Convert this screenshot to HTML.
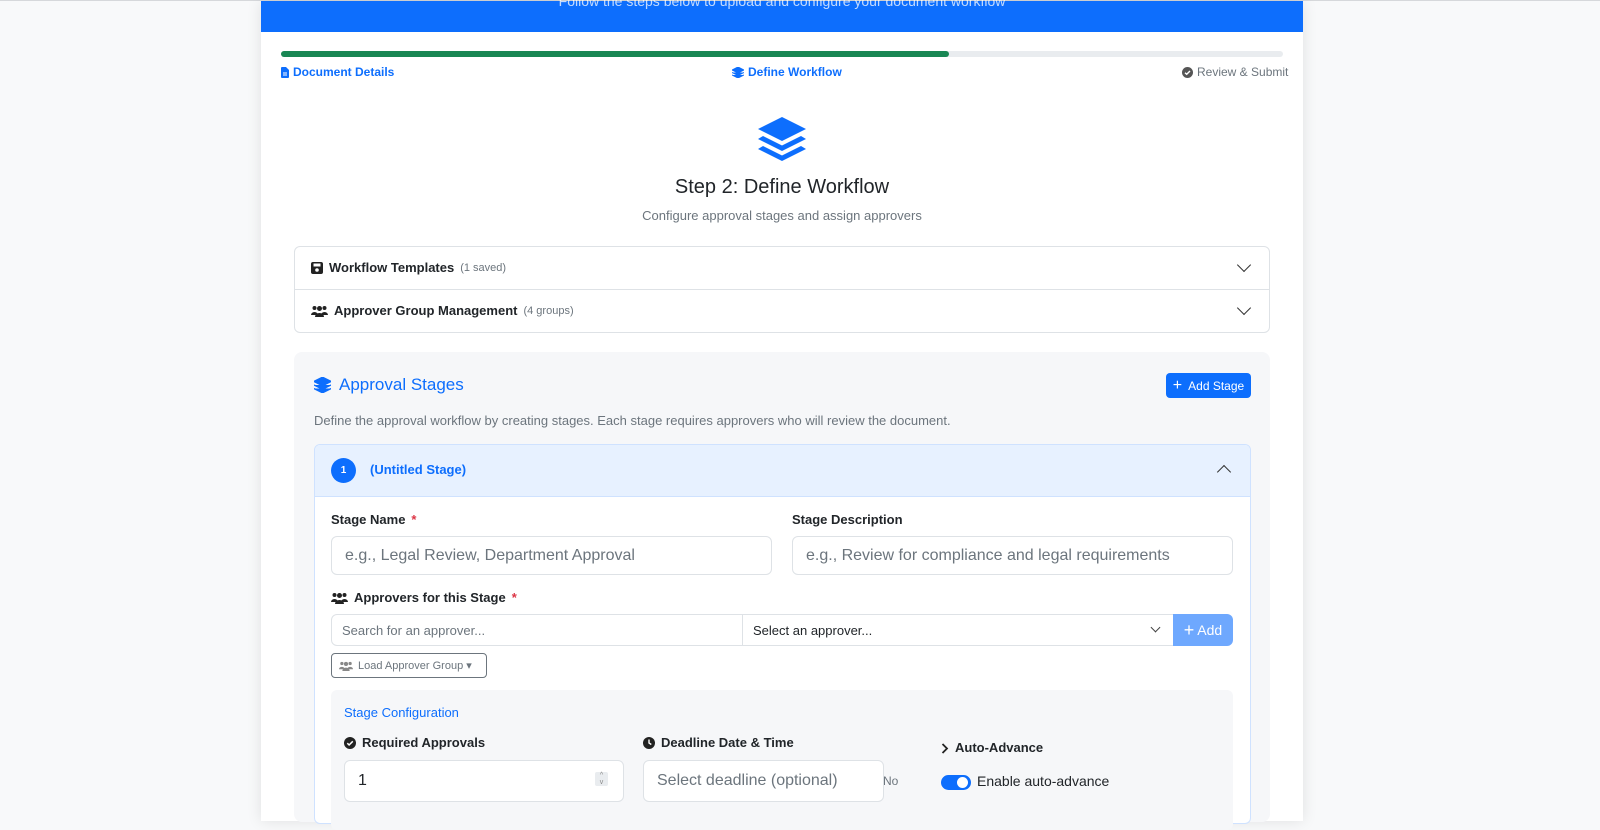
<!DOCTYPE html>
<html><head><meta charset="utf-8"><style>
*{box-sizing:border-box;margin:0;padding:0}
body{width:1600px;height:806px;overflow:hidden;background:#f8f9fa;font-family:"Liberation Sans","DejaVu Sans",sans-serif;color:#212529;position:relative}
.a{position:absolute}
.topline{left:0;top:0;width:1600px;height:1px;background:#d6d8db}
.card{left:261px;top:1px;width:1042px;height:820px;background:#fff;box-shadow:0 0 14px rgba(0,0,0,.10)}
.hdr{left:261px;top:1px;width:1042px;height:31px;background:#0d6efd}
.hdrt{left:261px;width:1042px;top:-7px;text-align:center;color:rgba(255,255,255,.75);font-size:14px}
.step{font-size:12px;font-weight:bold;color:#0d6efd;top:65px;line-height:15px;display:flex;align-items:center;gap:4px}
.inp{background:#fff;border:1px solid #dee2e6;border-radius:6px;color:#6c757d;font-size:16px;display:flex;align-items:center;padding-left:13px}
.lbl{font-size:13px;font-weight:bold;color:#212529;display:flex;align-items:center;gap:6px;line-height:16px}
.chev{width:10px;height:10px;border-right:1.5px solid #333;border-bottom:1.5px solid #333;transform:rotate(45deg)}
</style></head><body>
<div class="a topline"></div>
<div class="a card"></div>
<div class="a hdr"></div>
<div class="a hdrt">Follow the steps below to upload and configure your document workflow</div>
<div class="a" style="left:281px;top:51px;width:1002px;height:6px;border-radius:3px;background:#e9ecef"></div>
<div class="a" style="left:281px;top:51px;width:668px;height:6px;border-radius:3px;background:#198754"></div>
<div class="a step" style="left:281px"><svg width="8" height="11" viewBox="0 0 8 11"><path d="M0 1a1 1 0 0 1 1-1h4l3 3v7a1 1 0 0 1-1 1H1a1 1 0 0 1-1-1z" fill="#0d6efd"/><path d="M2 6h4M2 8h4" stroke="#fff" stroke-width="1"/></svg>Document Details</div>
<div class="a step" style="left:732px"><svg width="12" height="11" viewBox="0 0 12 11"><path d="M6 0L12 3 6 6 0 3z M0 5.5L6 8.5 12 5.5 M0 8L6 11 12 8" fill="#0d6efd" stroke="#0d6efd" stroke-width="1"/></svg>Define Workflow</div>
<div class="a" style="left:1182px;top:65px;font-size:12px;color:#6c757d;display:flex;align-items:center;gap:4px;line-height:15px"><svg width="11" height="11"><circle cx="5.5" cy="5.5" r="5.5" fill="#555"/><path d="M3 5.7l1.7 1.6L8 4" stroke="#fff" stroke-width="1.4" fill="none"/></svg>Review &amp; Submit</div>
<svg class="a" style="left:758px;top:117px" width="48" height="47" viewBox="0 0 48 47"><path d="M24 0L48 12 24 24 0 12z" fill="#0d6efd"/><path d="M5 19l19 9.5L43 19l5 3-24 12L0 22z" fill="#0d6efd"/><path d="M5 29l19 9.5L43 29l5 3-24 12L0 32z" fill="#0d6efd"/></svg>
<div class="a" style="left:261px;width:1042px;top:176px;text-align:center;font-size:20px;color:#212529">Step 2: Define Workflow</div>
<div class="a" style="left:261px;width:1042px;top:208px;text-align:center;font-size:13px;color:#6c757d">Configure approval stages and assign approvers</div>
<div class="a" style="left:294px;top:246px;width:976px;height:87px;border:1px solid #dee2e6;border-radius:6px"></div>
<div class="a" style="left:295px;top:289px;width:974px;height:1px;background:#dee2e6"></div>
<div class="a lbl" style="left:311px;top:260px"><svg width="12" height="12"><rect x="0" y="0" width="12" height="12" rx="2" fill="#222"/><rect x="2.5" y="1.5" width="7" height="3" fill="#fff"/><circle cx="6" cy="8" r="1.8" fill="#fff"/></svg>Workflow Templates <span style="font-weight:normal;color:#6c757d;font-size:11px">(1 saved)</span></div>
<div class="a lbl" style="left:311px;top:303px"><svg width="17" height="12" viewBox="0 0 17 12"><circle cx="3.5" cy="3" r="2" fill="#222"/><circle cx="13.5" cy="3" r="2" fill="#222"/><circle cx="8.5" cy="3.5" r="2.5" fill="#222"/><path d="M0 10a3.5 3 0 0 1 7 0zM10 10a3.5 3 0 0 1 7 0zM4 12a4.5 4 0 0 1 9 0z" fill="#222"/></svg>Approver Group Management <span style="font-weight:normal;color:#6c757d;font-size:11px">(4 groups)</span></div>
<div class="a chev" style="left:1239px;top:260px"></div>
<div class="a chev" style="left:1239px;top:303px"></div>
<div class="a" style="left:294px;top:352px;width:976px;height:470px;background:#f6f7f9;border-radius:8px"></div>
<svg class="a" style="left:314px;top:377px" width="17" height="16" viewBox="0 0 12 11"><path d="M6 0L12 3 6 6 0 3z M0 5.5L6 8.5 12 5.5 M0 8L6 11 12 8" fill="#0d6efd" stroke="#0d6efd" stroke-width="1"/></svg>
<div class="a" style="left:339px;top:375px;font-size:17px;color:#0d6efd">Approval Stages</div>
<div class="a" style="left:1166px;top:373px;width:85px;height:25px;background:#0d6efd;border-radius:4px;color:#fff;font-size:12px;display:flex;align-items:center;justify-content:center;gap:6px"><span style="font-size:16px;line-height:1">+</span>Add Stage</div>
<div class="a" style="left:314px;top:413px;font-size:13px;color:#6c757d">Define the approval workflow by creating stages. Each stage requires approvers who will review the document.</div>
<div class="a" style="left:314px;top:444px;width:937px;height:380px;background:#fff;border:1px solid #cfe2ff;border-radius:6px;overflow:hidden"><div style="height:52px;background:#e7f1ff;border-bottom:1px solid #cfe2ff"></div></div>
<div class="a" style="left:331px;top:458px;width:25px;height:25px;border-radius:50%;background:#0d6efd;color:#fff;font-size:10px;font-weight:bold;display:flex;align-items:center;justify-content:center">1</div>
<div class="a" style="left:370px;top:462px;font-size:13px;font-weight:bold;color:#0d6efd">(Untitled Stage)</div>
<div class="a chev" style="left:1219px;top:467px;transform:rotate(225deg)"></div>
<div class="a lbl" style="left:331px;top:512px">Stage Name <span style="color:#dc3545">*</span></div>
<div class="a lbl" style="left:792px;top:512px">Stage Description</div>
<div class="a inp" style="left:331px;top:536px;width:441px;height:39px">e.g., Legal Review, Department Approval</div>
<div class="a inp" style="left:792px;top:536px;width:441px;height:39px">e.g., Review for compliance and legal requirements</div>
<div class="a lbl" style="left:331px;top:590px"><svg width="17" height="12" viewBox="0 0 17 12"><circle cx="3.5" cy="3" r="2" fill="#222"/><circle cx="13.5" cy="3" r="2" fill="#222"/><circle cx="8.5" cy="3.5" r="2.5" fill="#222"/><path d="M0 10a3.5 3 0 0 1 7 0zM10 10a3.5 3 0 0 1 7 0zM4 12a4.5 4 0 0 1 9 0z" fill="#222"/></svg>Approvers for this Stage <span style="color:#dc3545">*</span></div>
<div class="a inp" style="left:331px;top:614px;width:412px;height:32px;font-size:13px;border-radius:6px 0 0 6px;padding-left:10px">Search for an approver...</div>
<div class="a inp" style="left:742px;top:614px;width:432px;height:32px;font-size:13px;color:#212529;border-radius:0;padding-left:10px">Select an approver...</div>
<div class="a chev" style="left:1152px;top:624px;width:7px;height:7px;border-color:#444;border-width:1.2px"></div>
<div class="a" style="left:1173px;top:614px;width:60px;height:32px;background:#6ea8fe;border-radius:0 6px 6px 0;color:#fff;font-size:14px;display:flex;align-items:center;justify-content:center;gap:3px"><span style="font-size:18px;line-height:1">+</span>Add</div>
<div class="a" style="left:331px;top:653px;width:156px;height:25px;border:1px solid #6c757d;border-radius:4px;font-size:11px;color:#6c757d;display:flex;align-items:center;padding-left:7px;gap:5px"><svg width="14" height="10" viewBox="0 0 17 12"><circle cx="3.5" cy="3" r="2" fill="#888"/><circle cx="13.5" cy="3" r="2" fill="#888"/><circle cx="8.5" cy="3.5" r="2.5" fill="#888"/><path d="M0 10a3.5 3 0 0 1 7 0zM10 10a3.5 3 0 0 1 7 0zM4 12a4.5 4 0 0 1 9 0z" fill="#888"/></svg>Load Approver Group ▾</div>
<div class="a" style="left:331px;top:690px;width:902px;height:140px;background:#f6f7f9;border-radius:6px"></div>
<div class="a" style="left:344px;top:705px;font-size:13px;color:#0d6efd">Stage Configuration</div>
<div class="a lbl" style="left:344px;top:735px"><svg width="12" height="12"><circle cx="6" cy="6" r="6" fill="#222"/><path d="M3.3 6.2l1.8 1.8L8.8 4.3" stroke="#fff" stroke-width="1.5" fill="none"/></svg>Required Approvals</div>
<div class="a lbl" style="left:643px;top:735px"><svg width="12" height="12"><circle cx="6" cy="6" r="6" fill="#222"/><path d="M6 2.5V6l2.3 1.5" stroke="#fff" stroke-width="1.4" fill="none"/></svg>Deadline Date &amp; Time</div>
<div class="a inp" style="left:344px;top:760px;width:280px;height:42px;color:#212529">1</div>
<div class="a" style="left:595px;top:772px;width:13px;height:14px;background:#e9ecef;border-radius:2px;font-size:7px;color:#888;text-align:center;line-height:7px">^<br>v</div>
<div class="a inp" style="left:643px;top:760px;width:241px;height:42px">Select deadline (optional)</div>
<div class="a" style="left:883px;top:774px;font-size:12px;color:#6c757d">No</div>
<div class="a lbl" style="left:941px;top:740px;font-size:13px"><svg width="8" height="11"><path d="M1.5 1l4.5 4.5L1.5 10" stroke="#222" stroke-width="1.8" fill="none"/></svg>Auto-Advance</div>
<div class="a" style="left:941px;top:775px;width:30px;height:15px;border-radius:8px;background:#0d6efd"></div>
<div class="a" style="left:957px;top:777px;width:11px;height:11px;border-radius:50%;background:#fff"></div>
<div class="a" style="left:977px;top:773px;font-size:14px;color:#212529">Enable auto-advance</div>
</body></html>
